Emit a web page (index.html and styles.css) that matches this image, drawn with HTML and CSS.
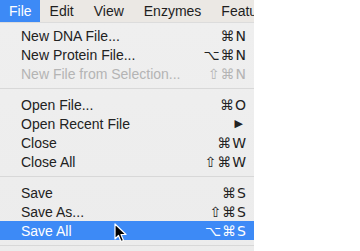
FILE: index.html
```html
<!DOCTYPE html>
<html lang="en">
<head>
  <meta charset="UTF-8">
  <title>File Menu</title>
  <link rel="stylesheet" href="styles.css">
</head>
<body>
  <div class="screen">
    <div class="menubar">
      <span class="title active">File</span>
      <span class="title">Edit</span>
      <span class="title">View</span>
      <span class="title">Enzymes</span>
      <span class="title">Features</span>
    </div>
    <div class="menu">
      <div class="item"><span>New DNA File...</span><span class="key">⌘N</span></div>
      <div class="item"><span>New Protein File...</span><span class="key">⌥⌘N</span></div>
      <div class="item disabled"><span>New File from Selection...</span><span class="key">⇧⌘N</span></div>
      <div class="sep"></div>
      <div class="item"><span>Open File...</span><span class="key">⌘O</span></div>
      <div class="item"><span>Open Recent File</span><span class="key arrow">▶</span></div>
      <div class="item"><span>Close</span><span class="key">⌘W</span></div>
      <div class="item"><span>Close All</span><span class="key">⇧⌘W</span></div>
      <div class="sep"></div>
      <div class="item"><span>Save</span><span class="key">⌘S</span></div>
      <div class="item"><span>Save As...</span><span class="key">⇧⌘S</span></div>
      <div class="item selected">
        <span>Save All</span><span class="key">⌥⌘S</span>
        <svg class="cursor" width="14" height="20" viewBox="0 0 14 20">
          <path d="M1 1 L1 16 L4.5 12.5 L7 18.5 L9.5 17.5 L7 11.5 L12 11.5 Z" fill="#000" stroke="#fff" stroke-width="1.2" stroke-linejoin="round"/>
        </svg>
      </div>
      <div class="sep"></div>
    </div>
  </div>
</body>
</html>
```

FILE: styles.css
```css
body {
  margin: 0;
  background: #ffffff;
  font-family: "Liberation Sans", "DejaVu Sans", Arial, sans-serif;
  font-size: 14px;
  color: #222222;
}

.screen {
  width: 254px;
  height: 251px;
  overflow: hidden;
  background: #eeeeee;
}

.menubar {
  display: flex;
  height: 22px;
  align-items: center;
  background: #ebe8e4;
  white-space: nowrap;
  overflow: hidden;
}

.menubar .title {
  padding: 0 10px;
  line-height: 22px;
  font-size: 14px;
  color: #1e1e1e;
}

.menubar .title.active {
  padding: 0 8px 0 9px;
  background: #3d8af6;
  color: #ffffff;
}

.menu {
  padding-top: 3px;
  height: 228px;
  background: linear-gradient(#efefef, #ececec);
  border-top: 1px solid #dcdcdc;
}

.item {
  position: relative;
  display: flex;
  justify-content: space-between;
  align-items: center;
  height: 19px;
  padding: 0 8px 0 21px;
  white-space: nowrap;
}

.item .key {
  font-family: "DejaVu Sans", "Liberation Sans", sans-serif;
  font-size: 14px;
  letter-spacing: 1px;
  margin-right: -1px;
}

.item .arrow {
  font-size: 11px;
  margin-right: 2px;
}

.item.disabled {
  color: #b4b4b4;
}

.item.selected {
  background: #3d8af6;
  color: #ffffff;
}

.sep {
  height: 1px;
  margin: 5px 0 6px;
  background: #d8d8d8;
}

.cursor {
  position: absolute;
  left: 114px;
  top: 2px;
}
```
